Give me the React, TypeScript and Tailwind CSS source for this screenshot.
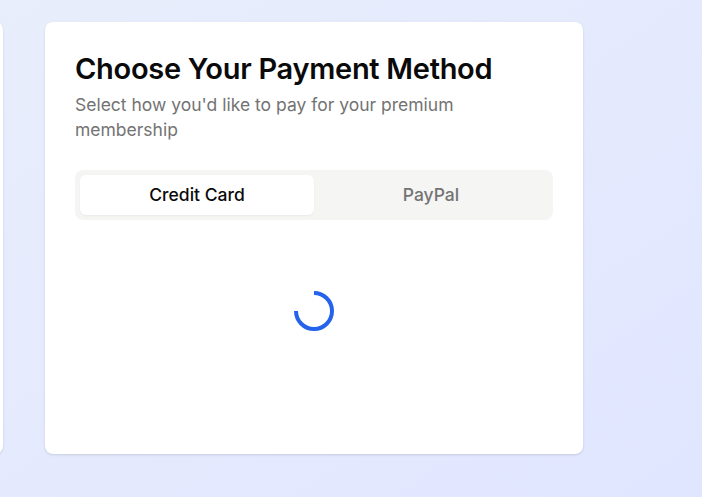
export default function App() {
  return (
    <div
      className="h-[497px] w-[702px] overflow-hidden bg-gradient-to-br from-[#e9eefc] to-[#e0e6ff] pt-[22px]"
      style={{ fontFamily: "Inter, 'Noto Sans', sans-serif" }}
    >
      <div className="flex gap-[42px] -ml-[535px]">
        {/* previous card, mostly off-screen */}
        <div className="h-[432px] w-[538px] shrink-0 rounded-lg bg-white shadow-sm" />

        {/* payment card */}
        <div className="h-[432px] w-[538px] shrink-0 rounded-lg bg-white p-[30px] shadow-sm">
          <h1 className="text-[29px] font-semibold leading-[34px] tracking-[-0.01em] text-[#0a0a0a]">
            Choose Your Payment Method
          </h1>
          <p className="mt-[6px] max-w-md text-[17.5px] leading-[25px] text-[#737373]">
            Select how you'd like to pay for your premium membership
          </p>

          <div className="mt-[28px] flex h-[50px] rounded-lg bg-[#f5f5f4] p-[5px]">
            <button className="flex-1 rounded-md bg-white text-[17.5px] font-medium text-[#0a0a0a] shadow-[0_1px_2px_rgba(0,0,0,0.05)]">
              Credit Card
            </button>
            <button className="flex-1 text-[17.5px] font-medium text-[#737373]">PayPal</button>
          </div>

          <div className="flex justify-center pt-[70px]">
            <svg width="42" height="42" viewBox="0 0 42 42">
              <path
                d="M21 3 A18 18 0 1 1 3 21"
                fill="none"
                stroke="#2563eb"
                strokeWidth="4"
              />
            </svg>
          </div>
        </div>
      </div>
    </div>
  );
}
